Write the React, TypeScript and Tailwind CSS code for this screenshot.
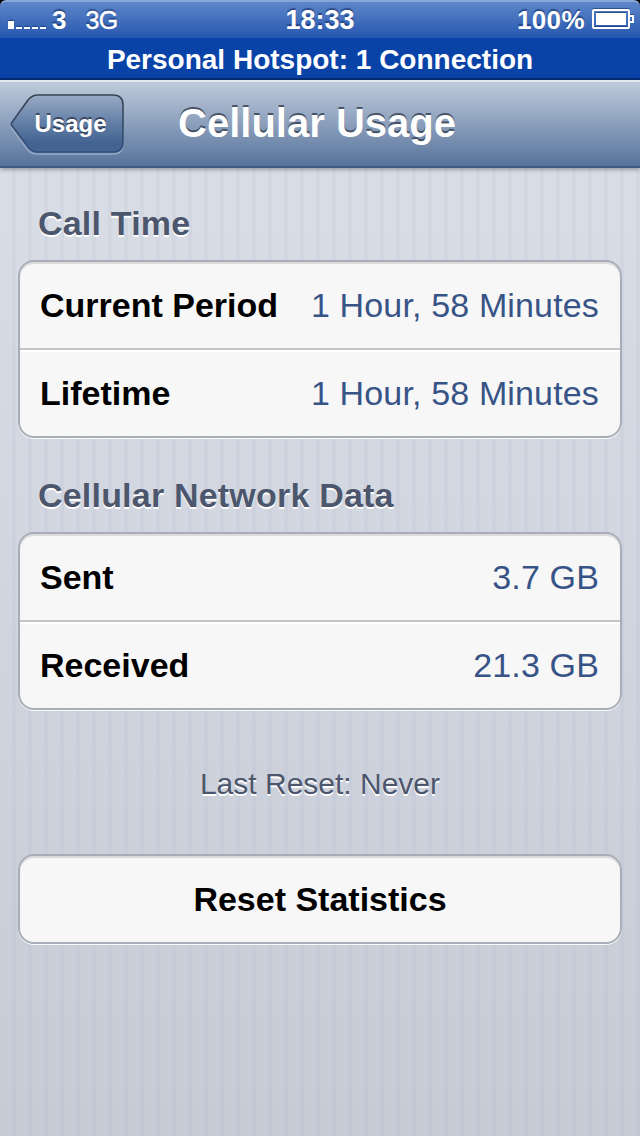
import type { ReactNode } from "react"

interface Row {
  label: string
  value: string
}

const callTime: Row[] = [
  { label: "Current Period", value: "1 Hour, 58 Minutes" },
  { label: "Lifetime", value: "1 Hour, 58 Minutes" },
]

const networkData: Row[] = [
  { label: "Sent", value: "3.7 GB" },
  { label: "Received", value: "21.3 GB" },
]

function StatusBar() {
  return (
    <div className="relative flex h-[38px] items-center justify-between rounded-t-[6px] border-t-2 border-[#88a8d8] bg-linear-to-b from-[#5e86c9] to-[#2557af] pr-[6px] pl-2 font-bold text-white [text-shadow:0_-2px_1px_rgba(0,20,70,0.45)]">
      <div className="flex items-center">
        <div className="mt-[19px] flex items-end gap-[2px] self-start">
          <span className="h-2 w-[6px] bg-white shadow-[0_-1px_1px_rgba(0,20,70,0.4)]" />
          {[0, 1, 2, 3].map((i) => (
            <span key={i} className="h-[2px] w-[6px] bg-white shadow-[0_-1px_1px_rgba(0,20,70,0.4)]" />
          ))}
        </div>
        <span className="ml-[6px] text-[26px] leading-9">3</span>
        <span className="ml-[19px] text-[25px] leading-9 font-normal tracking-[-0.5px] [-webkit-text-stroke:0.4px_white]">3G</span>
      </div>
      <span className="absolute inset-x-0 top-[-1px] text-center text-[27px] leading-[38px]">18:33</span>
      <div className="flex items-center">
        <span className="mr-[7px] text-[26px] leading-9 tracking-[0.4px]">100%</span>
        <svg width="42" height="22" viewBox="0 0 42 22" className="mt-[-3px] drop-shadow-[0_-1px_0_rgba(0,20,70,0.4)]">
          <rect x="1" y="2" width="36" height="18" rx="1" fill="none" stroke="#fff" strokeWidth="2" />
          <rect x="4" y="5" width="30" height="12" fill="#fff" />
          <path d="M38 8h3v6h-3" fill="none" stroke="#fff" strokeWidth="2" />
        </svg>
      </div>
    </div>
  )
}

function NavBar() {
  return (
    <header className="relative z-10 flex h-[88px] items-center justify-center border-t-2 border-b-2 border-t-[#e3e8ef] border-b-[#3c5a82] bg-linear-to-b from-[#bfcbdb] via-[#8b9fbc] to-[#57739b] shadow-[0_1px_5px_rgba(0,0,0,0.4)]">
      <button className="absolute top-[11px] left-[10px] h-[62px] w-[116px]">
        <svg width="116" height="62" viewBox="0 0 116 62" className="absolute inset-0">
          <defs>
            <linearGradient id="back-fill" x1="0" y1="0" x2="0" y2="1">
              <stop offset="0" stopColor="#9aabc4" />
              <stop offset="0.5" stopColor="#617ea6" />
              <stop offset="0.85" stopColor="#426290" />
              <stop offset="1" stopColor="#456593" />
            </linearGradient>
            <linearGradient id="back-edge" x1="0" y1="0" x2="0" y2="1">
              <stop offset="0" stopColor="#3b4350" />
              <stop offset="1" stopColor="#314f7e" />
            </linearGradient>
          </defs>
          <path
            d="M27 4H103Q113 4 113 14V51Q113 61 103 61H27Q21 61 17 56L1 34"
            fill="none"
            stroke="#9fb2cd"
            strokeOpacity="0.8"
            strokeWidth="1.5"
          />
          <path
            d="M28 2H103Q113 2 113 12V49Q113 59 103 59H28Q22 59 18 54L1.5 32Q1 31 1.5 30L18 7Q22 2 28 2Z"
            fill="url(#back-fill)"
            stroke="url(#back-edge)"
            strokeWidth="1.6"
          />
        </svg>
        <span className="relative block pl-[5px] text-center text-[24px] leading-[58px] font-bold text-white [text-shadow:0_-2px_0_rgba(40,50,70,0.75)]">
          Usage
        </span>
      </button>
      <h1 className="pr-[6px] pb-[2px] text-[40px] leading-[50px] font-bold text-white [text-shadow:0_-2px_0_rgba(50,60,75,0.8)]">
        Cellular Usage
      </h1>
    </header>
  )
}

function SectionTitle({ children }: { children: ReactNode }) {
  return (
    <h2 className="pl-5 text-[34px] leading-[42px] font-bold tracking-[0.2px] text-[#4c566c] [text-shadow:0_2px_0_#fff]">
      {children}
    </h2>
  )
}

const cardStyle =
  "rounded-[16px] border-2 border-[#a8adb7] bg-[#f7f7f7] shadow-[0_1px_0_rgba(255,255,255,0.9),inset_0_2px_1px_rgba(0,0,0,0.12)]"

function Group({ rows }: { rows: Row[] }) {
  return (
    <div className={cardStyle}>
      {rows.map((row, i) => (
        <div
          key={row.label}
          className={`flex items-center justify-between px-5 text-[34px] ${
            i === 0 ? "h-[86px]" : "h-[88px] border-t-2 border-[#c5c5c7] shadow-[inset_0_2px_0_#fff]"
          }`}
        >
          <span className="font-bold text-black">{row.label}</span>
          <span className="mr-px tracking-[0.15px] text-[#385487]">{row.value}</span>
        </div>
      ))}
    </div>
  )
}

export default function App() {
  return (
    <div className="bg-black font-['Liberation_Sans',Arial,sans-serif]">
      <div className="flex h-[1136px] w-[640px] flex-col overflow-hidden">
        <StatusBar />
        <div className="h-[42px] border-b-2 border-[#082f7c] bg-[#0a43a8] text-center text-[28px] leading-[44px] font-bold text-white">
          Personal Hotspot: 1 Connection
        </div>
        <NavBar />
        <main className="flex-1 bg-[repeating-linear-gradient(90deg,transparent_0_12px,rgba(150,165,195,0.1)_12px_16px),linear-gradient(#d9dde6,#c7cbd6)] px-[18px] pt-[34px]">
          <SectionTitle>Call Time</SectionTitle>
          <div className="mt-4">
            <Group rows={callTime} />
          </div>
          <div className="mt-9">
            <SectionTitle>Cellular Network Data</SectionTitle>
          </div>
          <div className="mt-4">
            <Group rows={networkData} />
          </div>
          <p className="mt-[54px] text-center text-[30px] leading-10 text-[#4c566c] [text-shadow:0_2px_0_#fff]">
            Last Reset: Never
          </p>
          <button className={`mt-[50px] block h-[90px] w-full text-center text-[34px] font-bold text-black ${cardStyle}`}>
            Reset Statistics
          </button>
        </main>
      </div>
    </div>
  )
}
